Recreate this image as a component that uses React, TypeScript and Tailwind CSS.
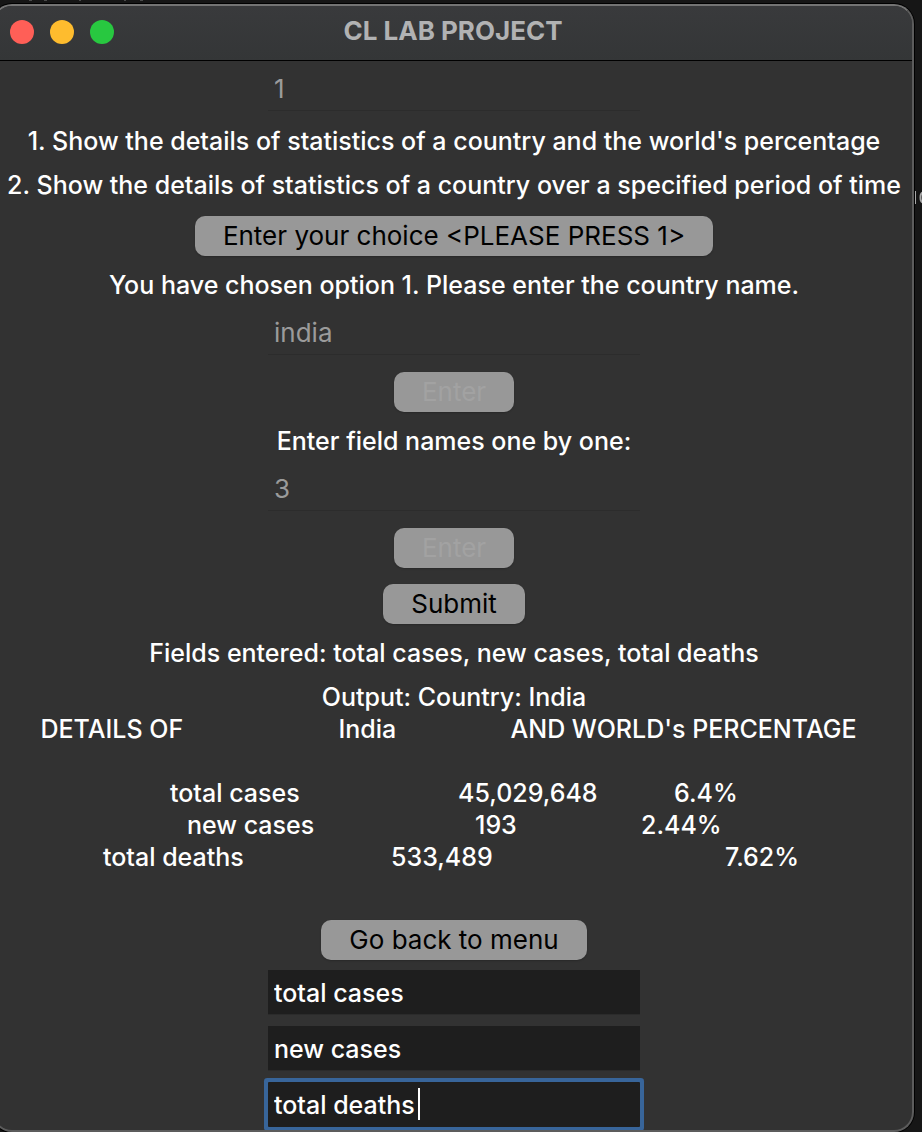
import { useState } from "react";
import type { ReactNode } from "react";

function Label({ children }: { children: ReactNode }) {
  return <p className="pt-[5px] pb-[7px] leading-8 whitespace-nowrap">{children}</p>;
}

function PushButton({ children, disabled = false }: { children: ReactNode; disabled?: boolean }) {
  return (
    <button
      type="button"
      disabled={disabled}
      className="my-2 flex h-10 items-center rounded-[10px] bg-[#989898] px-7 pb-0.5 text-[26px] font-normal text-black shadow-[0_1px_2px_rgba(0,0,0,0.2)] disabled:text-[#a2a2a2]"
    >
      {children}
    </button>
  );
}

function Entry({ label, initial, disabled = false }: { label: string; initial: string; disabled?: boolean }) {
  const [value, setValue] = useState(initial);
  return (
    <input
      type="text"
      aria-label={label}
      disabled={disabled}
      value={value}
      onChange={(e) => setValue(e.target.value)}
      className="mt-0.5 mb-[9px] h-[45px] w-[372px] border-b border-[#2b2b2b] bg-[#1e1e1e] px-1.5 pt-0.5 text-white outline-none disabled:border-[#2c2c2c] disabled:bg-[#323232] disabled:pt-0 disabled:text-[26px] disabled:font-normal disabled:text-[#9b9b9b]"
    />
  );
}

function ActiveEntry({ label, initial }: { label: string; initial: string }) {
  const [value, setValue] = useState(initial);
  return (
    <div className="relative mt-0.5 mb-[3px]">
      <input
        type="text"
        aria-label={label}
        value={value}
        onChange={(e) => setValue(e.target.value)}
        className="block h-[45px] w-[372px] rounded-[1px] bg-[#1e1e1e] px-1.5 pt-px text-white caret-transparent ring-4 ring-[#38659a] outline-none"
      />
      <span className="absolute top-1.5 left-[150px] h-8 w-0.5 bg-white" />
    </div>
  );
}

const rows = [
  { cells: ["DETAILS OF", "India", "AND WORLD's PERCENTAGE"], widths: ["w-[298px]", "w-[172px]", "w-[357px]"] },
  { cells: ["\u00a0", "", ""], widths: ["", "", ""] },
  { cells: ["total cases", "45,029,648", "6.4%"], widths: ["w-[288px]", "w-[216px]", "w-16"] },
  { cells: ["new cases", "193", "2.44%"], widths: ["w-[288px]", "w-[166px]", "w-20"] },
  { cells: ["total deaths", "533,489", "7.62%"], widths: ["w-[288px]", "w-[334px]", "w-20"] },
  { cells: ["\u00a0", "", ""], widths: ["", "", ""] },
];

export default function App() {
  return (
    <div className="relative overflow-hidden bg-[#161616] pt-1 pr-2 font-['Inter',sans-serif] text-[25px] font-medium text-white">
      <svg aria-hidden="true" className="absolute top-0 left-0 h-1 w-40" viewBox="0 0 160 4" fill="none" stroke="#4a4a4a">
        <path d="M29 .5h3M44 .5h3M79 .5h2M124 .5h2M140 .5h3" />
      </svg>
      <svg aria-hidden="true" className="absolute top-[186px] right-0 h-5 w-2" viewBox="0 0 8 20" fill="none" stroke="#a8a8a8">
        <path d="M1.5 5v13" />
        <path d="M9 6.5C6.8 6.8 6.5 9 6.5 11.5s.5 4.700 2.500 5" strokeWidth="2" />
      </svg>
      <main className="-ml-2 overflow-hidden rounded-[20px] border-2 border-[#5c5c5c] border-t-[#747474] bg-[#323232] shadow-[0_0_0_1px_#000]">
        <header className="relative flex h-[55px] items-center justify-center border-b border-black bg-linear-to-b from-[#393a3c] to-[#343637]">
          <div className="absolute top-3.5 left-4 flex gap-4">
            <button type="button" aria-label="Close" className="size-6 rounded-full bg-[#ff5f57]" />
            <button type="button" aria-label="Minimize" className="size-6 rounded-full bg-[#febc2e]" />
            <button type="button" aria-label="Zoom" className="size-6 rounded-full bg-[#28c840]" />
          </div>
          <h1 className="pb-1.5 text-[26px] font-bold text-[#b1b2b3]">CL LAB PROJECT</h1>
        </header>
        <form className="flex flex-col items-center pt-[3px] pl-0.5" onSubmit={(e) => e.preventDefault()}>
          <Entry label="Choice" initial="1" disabled />
          <Label>1. Show the details of statistics of a country and the world's percentage</Label>
          <Label>2. Show the details of statistics of a country over a specified period of time</Label>
          <PushButton>Enter your choice &lt;PLEASE PRESS 1&gt;</PushButton>
          <Label>You have chosen option 1. Please enter the country name.</Label>
          <Entry label="Country name" initial="india" disabled />
          <PushButton disabled>Enter</PushButton>
          <Label>Enter field names one by one:</Label>
          <Entry label="Number of fields" initial="3" disabled />
          <PushButton disabled>Enter</PushButton>
          <PushButton>Submit</PushButton>
          <Label>Fields entered: total cases, new cases, total deaths</Label>
          <table className="block pt-[5px] pb-[7px] leading-8 whitespace-nowrap">
            <caption className="block">Output: Country: India</caption>
            <tbody className="block">
              {rows.map((row, i) => (
                <tr key={i} className="flex justify-center">
                  {row.cells.map((cell, j) => (
                    <td key={j} className={`block p-0 ${row.widths[j]}`}>
                      {cell}
                    </td>
                  ))}
                </tr>
              ))}
            </tbody>
          </table>
          <PushButton>Go back to menu</PushButton>
          <Entry label="Field 1" initial="total cases" />
          <Entry label="Field 2" initial="new cases" />
          <ActiveEntry label="Field 3" initial="total deaths" />
        </form>
      </main>
    </div>
  );
}
